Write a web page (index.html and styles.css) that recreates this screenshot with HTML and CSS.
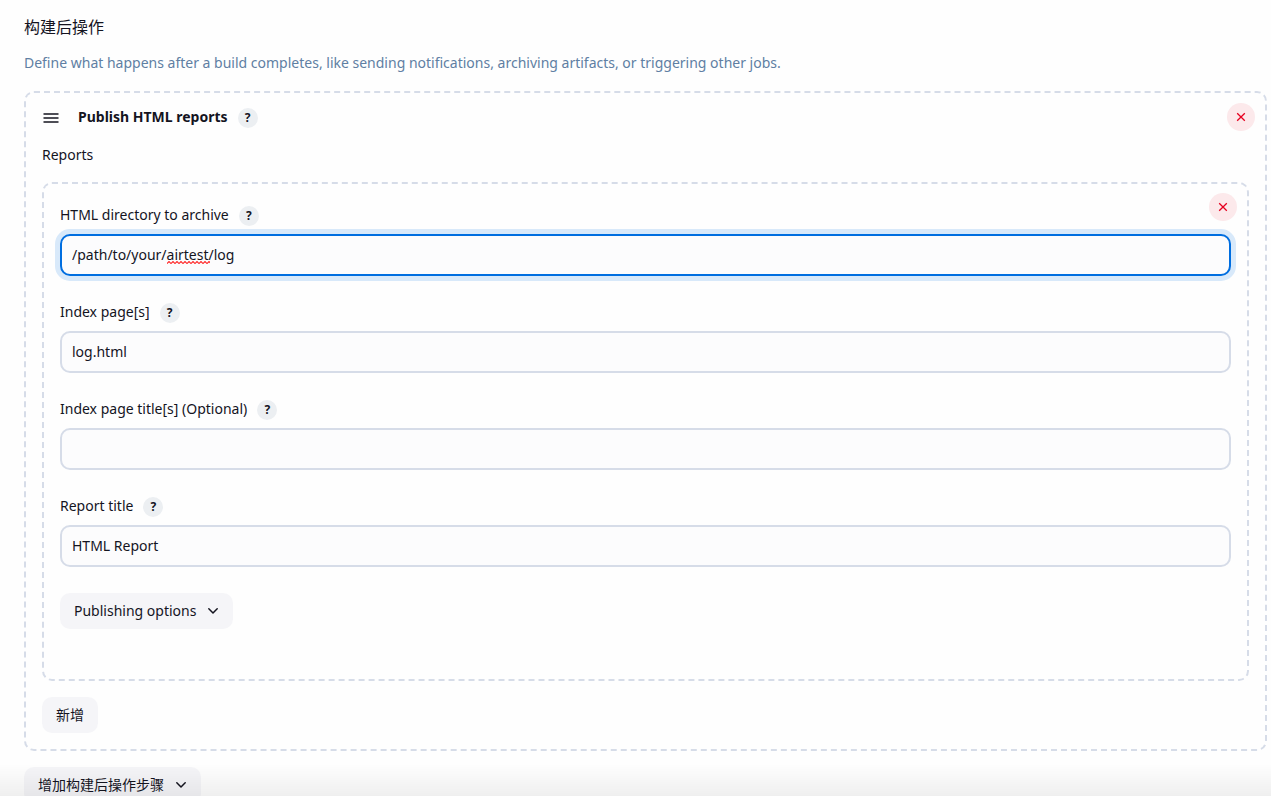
FILE: index.html
```html
<!DOCTYPE html>
<html lang="zh-CN">
<head>
<meta charset="utf-8">
<title>构建后操作</title>
<link rel="stylesheet" href="styles.css">
</head>
<body>
<svg class="symbols" aria-hidden="true">
  <symbol id="close" viewBox="0 0 10 10"><path d="M1.2 1.2l7.6 7.6M8.8 1.2L1.2 8.8" fill="none" stroke="currentColor" stroke-width="1.3"/></symbol>
  <symbol id="chevron" viewBox="0 0 12 12"><path d="M1.8 3.8L6 8l4.2-4.2" fill="none" stroke="currentColor" stroke-width="1.5" stroke-linecap="round" stroke-linejoin="round"/></symbol>
</svg>
<main class="page">
  <h2 class="section-title">构建后操作</h2>
  <p class="description">Define what happens after a build completes, like sending notifications, archiving artifacts, or triggering other jobs.</p>

  <section class="chunk publisher">
    <header class="chunk-header">
      <svg class="drag-handle" viewBox="0 0 16 10" aria-hidden="true"><path d="M.5 1h15M.5 5h15M.5 9h15" stroke="currentColor" stroke-width="1.5"/></svg>
      <h3 class="chunk-title">Publish HTML reports</h3>
      <button class="help" type="button" aria-label="Help: Publish HTML reports">?</button>
    </header>
    <button class="delete" type="button" aria-label="Delete"><svg class="delete-icon"><use href="#close"/></svg></button>
    <div class="list-label">Reports</div>

    <section class="chunk report">
      <button class="delete" type="button" aria-label="Delete report"><svg class="delete-icon"><use href="#close"/></svg></button>
      <div class="fields">
        <div class="field">
          <div class="label-row"><label for="dir">HTML directory to archive</label><button class="help" type="button" aria-label="Help: HTML directory">?</button></div>
          <div class="input-wrap">
            <input class="text-input focused" id="dir" type="text" value="/path/to/your/airtest/log" spellcheck="false">
            <svg class="misspelled" aria-hidden="true"><defs><pattern id="wave" width="4" height="3" patternUnits="userSpaceOnUse"><path d="M-1 1.5L0 2.5l2-2 2 2 1-1" fill="none" stroke="#f33" stroke-width="1.2"/></pattern></defs><rect width="100%" height="3" fill="url(#wave)"/></svg>
          </div>
        </div>
        <div class="field">
          <div class="label-row"><label for="index">Index page[s]</label><button class="help" type="button" aria-label="Help: Index pages">?</button></div>
          <input class="text-input" id="index" type="text" value="log.html">
        </div>
        <div class="field">
          <div class="label-row"><label for="titles">Index page title[s] (Optional)</label><button class="help" type="button" aria-label="Help: Index page titles">?</button></div>
          <input class="text-input" id="titles" type="text">
        </div>
        <div class="field">
          <div class="label-row"><label for="title">Report title</label><button class="help" type="button" aria-label="Help: Report title">?</button></div>
          <input class="text-input" id="title" type="text" value="HTML Report">
        </div>
      </div>
      <button class="button options" type="button">Publishing options<svg class="chevron"><use href="#chevron"/></svg></button>
    </section>

    <button class="button" type="button">新增</button>
  </section>

  <button class="button" type="button">增加构建后操作步骤<svg class="chevron"><use href="#chevron"/></svg></button>
</main>
<div class="bottom-shade"></div>
</body>
</html>
```
FILE: styles.css
```css
*, *::before, *::after { box-sizing: border-box; }

body {
  margin: 0;
  height: 100vh;
  overflow: hidden;
  background: #fefefe;
  color: #14141f;
  font: 14px/24px "Noto Sans", "Noto Sans CJK SC", sans-serif;
}

button, input { font: inherit; color: inherit; }
button { border: 0; cursor: pointer; }
.symbols { display: none; }

.page { padding: 15px 4px 0 24px; }
.section-title { margin: 0; font-size: 16px; font-weight: 400; }
.description { margin: 12px 0 16px; color: #607fa3; }

.chunk {
  position: relative;
  border: 2px dashed #d6dce8;
  border-radius: 10px;
}
.publisher { padding: 10px 16px 16px; margin-bottom: 16px; }
.report { padding: 19px 16px 50px; margin: 15px 0 16px; }

.chunk-header { display: flex; align-items: center; height: 28px; }
.drag-handle { width: 16px; height: 10px; margin: 2px 19px 0 1px; }
.chunk-title { margin: 0; font-size: 14px; font-weight: 700; }
.list-label { margin-top: 12px; }

.help {
  width: 20px;
  height: 20px;
  margin: 2px 0 0 10px;
  padding: 0;
  border-radius: 50%;
  background: #eceff2;
  font-size: 12px;
  font-weight: 700;
  line-height: 20px;
}

.delete {
  position: absolute;
  z-index: 1;
  top: 10px;
  right: 10px;
  display: grid;
  place-items: center;
  width: 28px;
  height: 28px;
  padding: 0;
  border-radius: 50%;
  background: #fce9eb;
  color: #e6001f;
}
.report > .delete { top: 9px; }
.delete-icon { width: 10px; height: 10px; }

.fields { display: grid; gap: 24px; }
.label-row { display: flex; align-items: center; height: 24px; margin-bottom: 7px; }
.input-wrap { position: relative; }
.text-input {
  display: block;
  width: 100%;
  height: 42px;
  padding: 0 10px 2px;
  border: 2px solid #d6dce8;
  border-radius: 10px;
  outline: 0;
  background: #fcfcfd;
}
.focused { border-color: #006ee0; box-shadow: 0 0 0 5px #d8e9fa; }
.misspelled { position: absolute; top: 27px; left: 107px; width: 43px; height: 3px; }

.button {
  display: inline-flex;
  align-items: center;
  height: 36px;
  padding: 0 14px;
  border-radius: 10px;
  background: #f5f5f8;
  vertical-align: top;
}
.options { margin-top: 26px; }
.chevron { width: 12px; height: 12px; margin-left: 11px; }

.bottom-shade {
  position: fixed;
  inset: auto 0 0;
  height: 32px;
  background: linear-gradient(transparent, rgba(0, 0, 0, 0.06));
  pointer-events: none;
}
```
